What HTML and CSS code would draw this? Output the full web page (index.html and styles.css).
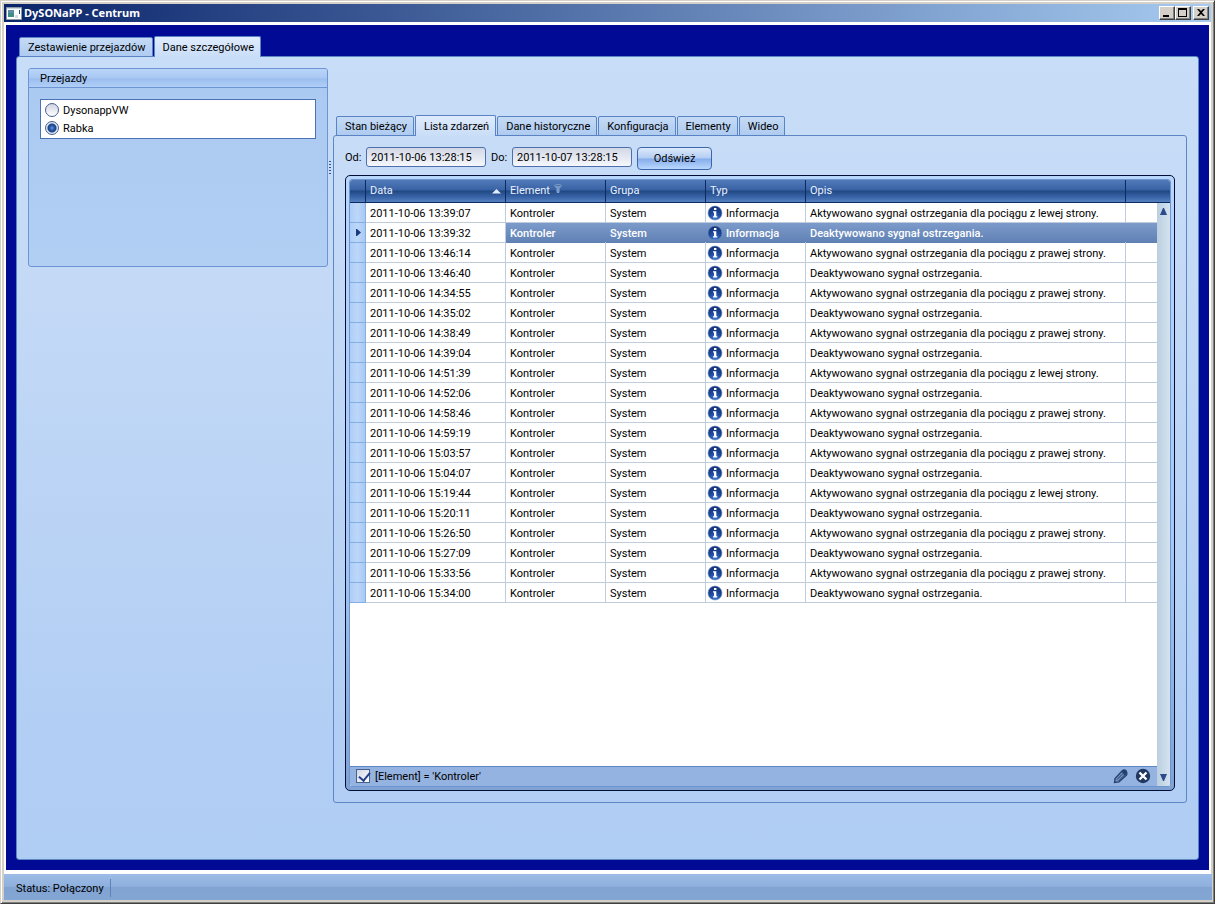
FILE: index.html
```html
<!DOCTYPE html>
<html lang="pl">
<head>
<meta charset="utf-8">
<title>DySONaPP - Centrum</title>
<link rel="stylesheet" href="styles.css">
</head>
<body>
<svg class="defs" aria-hidden="true">
  <defs>
    <radialGradient id="ball" cx="50%" cy="90%" r="90%">
      <stop offset="0" stop-color="#3d78d0"/><stop offset="0.5" stop-color="#1c4799"/><stop offset="1" stop-color="#142f74"/>
    </radialGradient>
    <symbol id="info" viewBox="0 0 16 16">
      <circle cx="8" cy="8" r="7" fill="url(#ball)" stroke="#6f8fc4" stroke-width="0.6"/>
      <path d="M7 3h2.400v2H7zM6 6.300h3.300v5h1V12.500H6v-1.200h1V7.500H6z" fill="#fff"/>
    </symbol>
  </defs>
</svg>
<div class="window">
  <header class="titlebar">
    <svg class="app-icon" width="16" height="13" viewBox="0 0 16 13"><path d="M.5.5h15v12H.5z" fill="#fff" stroke="#8a9aa8"/><path d="M1 1h14v1H1z" fill="#c8d4de"/><path d="M2 3h6v7H2z" fill="#3f8f86"/><path d="M2 3h6v3H2z" fill="#5b8fa5"/><path d="M9 8h3v3H9z" fill="#d8dcdc"/><path d="M13 3h1v4h-1z" fill="#35506a"/></svg>
    <h1>DySONaPP - Centrum</h1>
    <button class="win-btn" aria-label="Minimalizuj"><svg width="14" height="12" viewBox="0 0 14 12"><path d="M3 8h6v2H3z"/></svg></button>
    <button class="win-btn" aria-label="Maksymalizuj"><svg width="14" height="12" viewBox="0 0 14 12"><path d="M2 1h9v9H2zM3 3v6h7V3z" fill-rule="evenodd"/></svg></button>
    <button class="win-btn close" aria-label="Zamknij"><svg width="14" height="12" viewBox="0 0 14 12"><path d="M3 2h2l2 2 2-2h2L8 5.500 11 9H9L7 7 5 9H3l3-3.500z"/></svg></button>
  </header>
  <main class="client">
    <nav class="tabs outer-tabs">
      <button class="tab">Zestawienie przejazdów</button>
      <button class="tab active">Dane szczegółowe</button>
    </nav>
    <div class="page">
      <section class="group">
        <h2>Przejazdy</h2>
        <div class="radios">
          <label><input type="radio" name="crossing"><span>DysonappVW</span></label>
          <label><input type="radio" name="crossing" checked><span>Rabka</span></label>
        </div>
      </section>
      <div class="splitter"><i></i><i></i><i></i><i></i><i></i></div>
      <section class="details">
        <nav class="tabs">
          <button class="tab">Stan bieżący</button>
          <button class="tab active">Lista zdarzeń</button>
          <button class="tab">Dane historyczne</button>
          <button class="tab">Konfiguracja</button>
          <button class="tab">Elementy</button>
          <button class="tab">Wideo</button>
        </nav>
        <div class="panel">
          <form class="toolbar">
            <label for="from">Od:</label><input id="from" type="text" value="2011-10-06 13:28:15">
            <label for="to">Do:</label><input id="to" type="text" value="2011-10-07 13:28:15">
            <button type="button" class="refresh">Odśwież</button>
          </form>
          <div class="frame"><div class="grid">
            <table>
              <colgroup><col class="c-mark"><col class="c-date"><col class="c-mid"><col class="c-mid"><col class="c-mid"><col class="c-desc"><col></colgroup>
              <thead><tr>
                <th></th>
                <th><span class="sort">Data<svg width="9" height="5" viewBox="0 0 9 5"><path d="M0 4.500 4.500 0 9 4.500z" fill="#e4eefb"/></svg></span></th>
                <th><span class="filtered">Element<svg width="8" height="9" viewBox="0 0 8 9"><path d="M.5 1.500 3 4.500V8.500h2v-4l2.500-3z" fill="#6f94c8" stroke="#84a5d2"/><ellipse cx="4" cy="1.500" rx="3.500" ry="1" fill="#45699f" stroke="#84a5d2" stroke-width="0.800"/></svg></span></th>
                <th>Grupa</th><th>Typ</th><th>Opis</th><th></th>
              </tr></thead>
              <tbody id="events"></tbody>
            </table>
            <div class="filter">
              <label><input type="checkbox" checked><span>[Element] = 'Kontroler'</span></label>
              <button aria-label="Edytuj filtr"><svg width="15" height="15" viewBox="0 0 15 15"><path d="M1.500 13.500 2 9.500 9 2Q11.500 0 13 2t.5 4L6 13z" fill="#7390c0" stroke="#24406f" stroke-width="1.300"/><path d="m8.500 2.500 2-1.500h2.500l1 2-1 2.500-1.500 1z" fill="#24406f"/><path d="m4 10.500 6-6M5.500 12l6-6" stroke="#24406f"/></svg></button>
              <button aria-label="Usuń filtr"><svg width="16" height="16" viewBox="0 0 16 16"><circle cx="8" cy="8" r="7.200" fill="#1f3763"/><path d="m4.500 4.500 7 7M11.500 4.500l-7 7" stroke="#fff" stroke-width="2.400"/></svg></button>
            </div>
            <div class="scrollbar">
              <button aria-label="W górę"><svg width="7" height="7" viewBox="0 0 7 7"><path d="M0 7 3 0h1l3 7z" fill="#2b4b8c"/></svg></button>
              <button aria-label="W dół"><svg width="7" height="7" viewBox="0 0 7 7"><path d="M0 0h7L4 7H3z" fill="#2b4b8c"/></svg></button>
            </div>
          </div></div>
        </div>
      </section>
    </div>
  </main>
  <footer class="status"><span>Status: Połączony</span></footer>
</div>
<script src="events.js"></script>
</body>
</html>
```
FILE: styles.css
```css
* { box-sizing: border-box; }
body { margin: 0; font: 11px/14px Roboto, "Noto Sans", sans-serif; color: #000; }
button, input { font: inherit; color: inherit; margin: 0; }
button { padding: 0; border: 0; background: none; }
h1, h2 { margin: 0; font-size: 11px; line-height: 14px; }
svg { display: block; }
.defs { position: absolute; width: 0; height: 0; }

.window { min-height: 100vh; display: flex; flex-direction: column; background: #fff; border: 1px solid #d4d0c8; border-right-color: #404040; border-bottom-color: #404040; box-shadow: inset 1px 1px #fff, inset -1px -1px #808080, inset 0 0 0 3px #d4d0c8; padding: 3px; }
.titlebar { display: flex; align-items: center; height: 18px; padding: 0 2px 0 2px; background: linear-gradient(90deg, #0a246a, #a6caf0); color: #fff; }
.titlebar h1 { flex: 1; padding-left: 2px; font-family: "Noto Sans", sans-serif; }
.win-btn { width: 16px; height: 14px; background: #d4d0c8; border: 1px solid; border-color: #fff #404040 #404040 #fff; box-shadow: inset -1px -1px #808080; }
.win-btn.close { margin-left: 2px; }

.client { flex: 1; display: flex; flex-direction: column; margin: 3px 2px 4px 2px; padding: 11px 10px 10px; background: #000a94; }
.tabs { display: flex; align-items: flex-end; gap: 1px; height: 21px; padding-left: 3px; position: relative; z-index: 1; margin-bottom: -1px; }
.tab { height: 20px; padding: 2px 6px 0 8px; border: 1px solid #5a83c4; border-radius: 2px 2px 0 0; background: linear-gradient(#c5daf5, #aecbf0); white-space: nowrap; }
.tab.active { height: 21px; border-bottom: 0; background: linear-gradient(#e0ecfd, #c8ddf7); }
.page { flex: 1; display: flex; padding: 11px 11px 56px; border: 1px solid #5d87c0; border-radius: 3px; background: linear-gradient(#c8ddf7, #c3d9f6 30%, #b2cef4 85%, #b0cdf3); }

.group { width: 300px; height: 199px; flex: none; border: 1px solid #6d94d3; border-radius: 3px; background: linear-gradient(#abcaf1, #b1cef3); }
.group h2 { font-weight: normal; height: 19px; padding: 3px 11px 0; border-bottom: 1px solid #6d94d3; border-radius: 2px 2px 0 0; background: linear-gradient(#b9d5f9, #a9c8f3 50%, #9bbeee 55%, #b0cff7); }
.radios { margin: 11px; padding: 1px 4px; border: 1px solid #4a72b4; background: #fff; }
.radios label { display: flex; align-items: center; gap: 4px; height: 18px; }
.radios span, .filter span { padding-top: 2px; }
.radios input { appearance: none; width: 14px; height: 14px; border: 1px solid #46618f; border-radius: 50%; background: linear-gradient(#cfd5e2, #fff); }
.radios input:checked { background: radial-gradient(circle at 50% 50%, #6c9cea 0, #2d5cab 2px, #1c3f85 4px, #dde5f2 5px); }
.splitter { width: 5px; display: flex; flex-direction: column; gap: 2px; padding: 93px 0 0 1px; }
.splitter i { width: 2px; height: 1px; background: #31568f; }

.details { flex: 1; min-width: 0; display: flex; flex-direction: column; padding-top: 47px; }
.panel { flex: 1; display: flex; flex-direction: column; padding: 11px; border: 1px solid #5d87c4; border-radius: 3px; }
.toolbar { display: flex; align-items: flex-start; height: 28px; line-height: 20px; }
.toolbar label { width: 18px; padding-top: 1px; white-space: nowrap; }
.toolbar input { width: 120px; height: 20px; margin: 0 5px 0 3px; padding: 2px 4px 0; border: 1px solid #4d70ad; border-radius: 3px; background: linear-gradient(#d3d8e6, #f5f7fb); }
.refresh { width: 75px; height: 23px; padding-top: 1px; border: 1px solid #3c66a8; border-radius: 4px; background: linear-gradient(#dde9fb, #b2cdf3 48%, #86acea 52%, #b9d8ff); }

.frame { flex: 1; display: flex; padding: 3px; border: 1px solid #020d38; border-radius: 5px; background: linear-gradient(#b8d5fb, #a6c8f3 60%, #7fa2d2); }
.grid { flex: 1; position: relative; display: flex; flex-direction: column; border: 1px solid #6d94d3; border-radius: 3px; background: #fff; overflow: hidden; }
table { width: 100%; table-layout: fixed; border-collapse: separate; border-spacing: 0; }
.c-mark { width: 16px; } .c-date { width: 140px; } .c-mid { width: 100px; } .c-desc { width: 320px; }
th { height: 23px; padding: 0 4px; text-align: left; font-weight: normal; color: #e8f1ff; border-right: 1px solid #0c2a62; border-bottom: 1px solid #0c2a62; background: linear-gradient(#517bb8, #3862a4 45%, #204882 50%, #3661a5 75%, #5480bf); }
th:last-child, td:last-child { border-right: 0; }
.sort { display: flex; justify-content: space-between; align-items: center; }
.filtered { display: flex; align-items: flex-start; gap: 4px; }
td { height: 20px; padding: 2px 4px 0; border-right: 1px solid #c0cbdc; border-bottom: 1px solid #c0cbdc; white-space: nowrap; overflow: hidden; }
td:first-child { padding: 0 0 0 6px; border-color: #87aee2; background: linear-gradient(90deg, #aecdf5, #bcd7fa 50%, #a9c9f3); }
td:nth-child(5) { padding: 0 4px 0 1px; }
.type { display: flex; align-items: center; gap: 3px; height: 18px; }
.type span { padding-top: 2px; }
.selected td:nth-child(n+3) { color: #fff; font-weight: 500; border-right-color: transparent; border-bottom-color: #6080b1; background: linear-gradient(#7c9bcb, #5f80b3) border-box; }
.filter { display: flex; align-items: center; gap: 7px; height: 20px; margin-top: auto; padding: 0 19px 1px 6px; border-top: 1px solid #5d87c4; background: #95b3e0; }
.filter label { flex: 1; display: flex; align-items: center; gap: 5px; }
.filter input { appearance: none; width: 14px; height: 14px; border: 1px solid #46618f; background: linear-gradient(135deg, #d0d6e4, #fff); position: relative; }
.filter input:checked::after { content: ""; position: absolute; left: 4px; top: 0; width: 5px; height: 9px; border: solid #24408a; border-width: 0 2px 2px 0; transform: rotate(40deg); }
.scrollbar { position: absolute; top: 23px; right: 0; bottom: 0; width: 13px; display: flex; flex-direction: column; justify-content: space-between; padding: 5px 3px; background: linear-gradient(90deg, #bccfe0, #d3e3ef); }

.status { height: 26px; margin: 0 -1px 0 0; padding: 5px 12px; background: linear-gradient(#9dbde8, #8eafdc 49%, #80a3d2 50%, #84a6d5); }
.status span { display: inline-block; height: 18px; line-height: 18px; padding: 1px 6px 0 0; border-right: 1px solid #5f83b8; }
```
FILE: events.js
```
const times = ["13:39:07", "13:39:32", "13:46:14", "13:46:40", "14:34:55", "14:35:02", "14:38:49", "14:39:04", "14:51:39", "14:52:06", "14:58:46", "14:59:19", "15:03:57", "15:04:07", "15:19:44", "15:20:11", "15:26:50", "15:27:09", "15:33:56", "15:34:00"];
const fromLeft = new Set([0, 8, 14]);
const selected = 1;
const marker = '<svg width="5" height="7" viewBox="0 0 5 7"><path d="M0 0h1l4 3.500L1 7H0z" fill="#173a7a"/></svg>';

document.getElementById("events").innerHTML = times.map((time, i) => {
  const text = i % 2
    ? "Deaktywowano sygnał ostrzegania."
    : `Aktywowano sygnał ostrzegania dla pociągu z ${fromLeft.has(i) ? "lewej" : "prawej"} strony.`;
  return `<tr${i === selected ? ' class="selected"' : ""}>
    <td>${i === selected ? marker : ""}</td><td>2011-10-06 ${time}</td><td>Kontroler</td><td>System</td>
    <td><span class="type"><svg width="16" height="16"><use href="#info"/></svg><span>Informacja</span></span></td><td>${text}</td><td></td></tr>`;
}).join("");
```
